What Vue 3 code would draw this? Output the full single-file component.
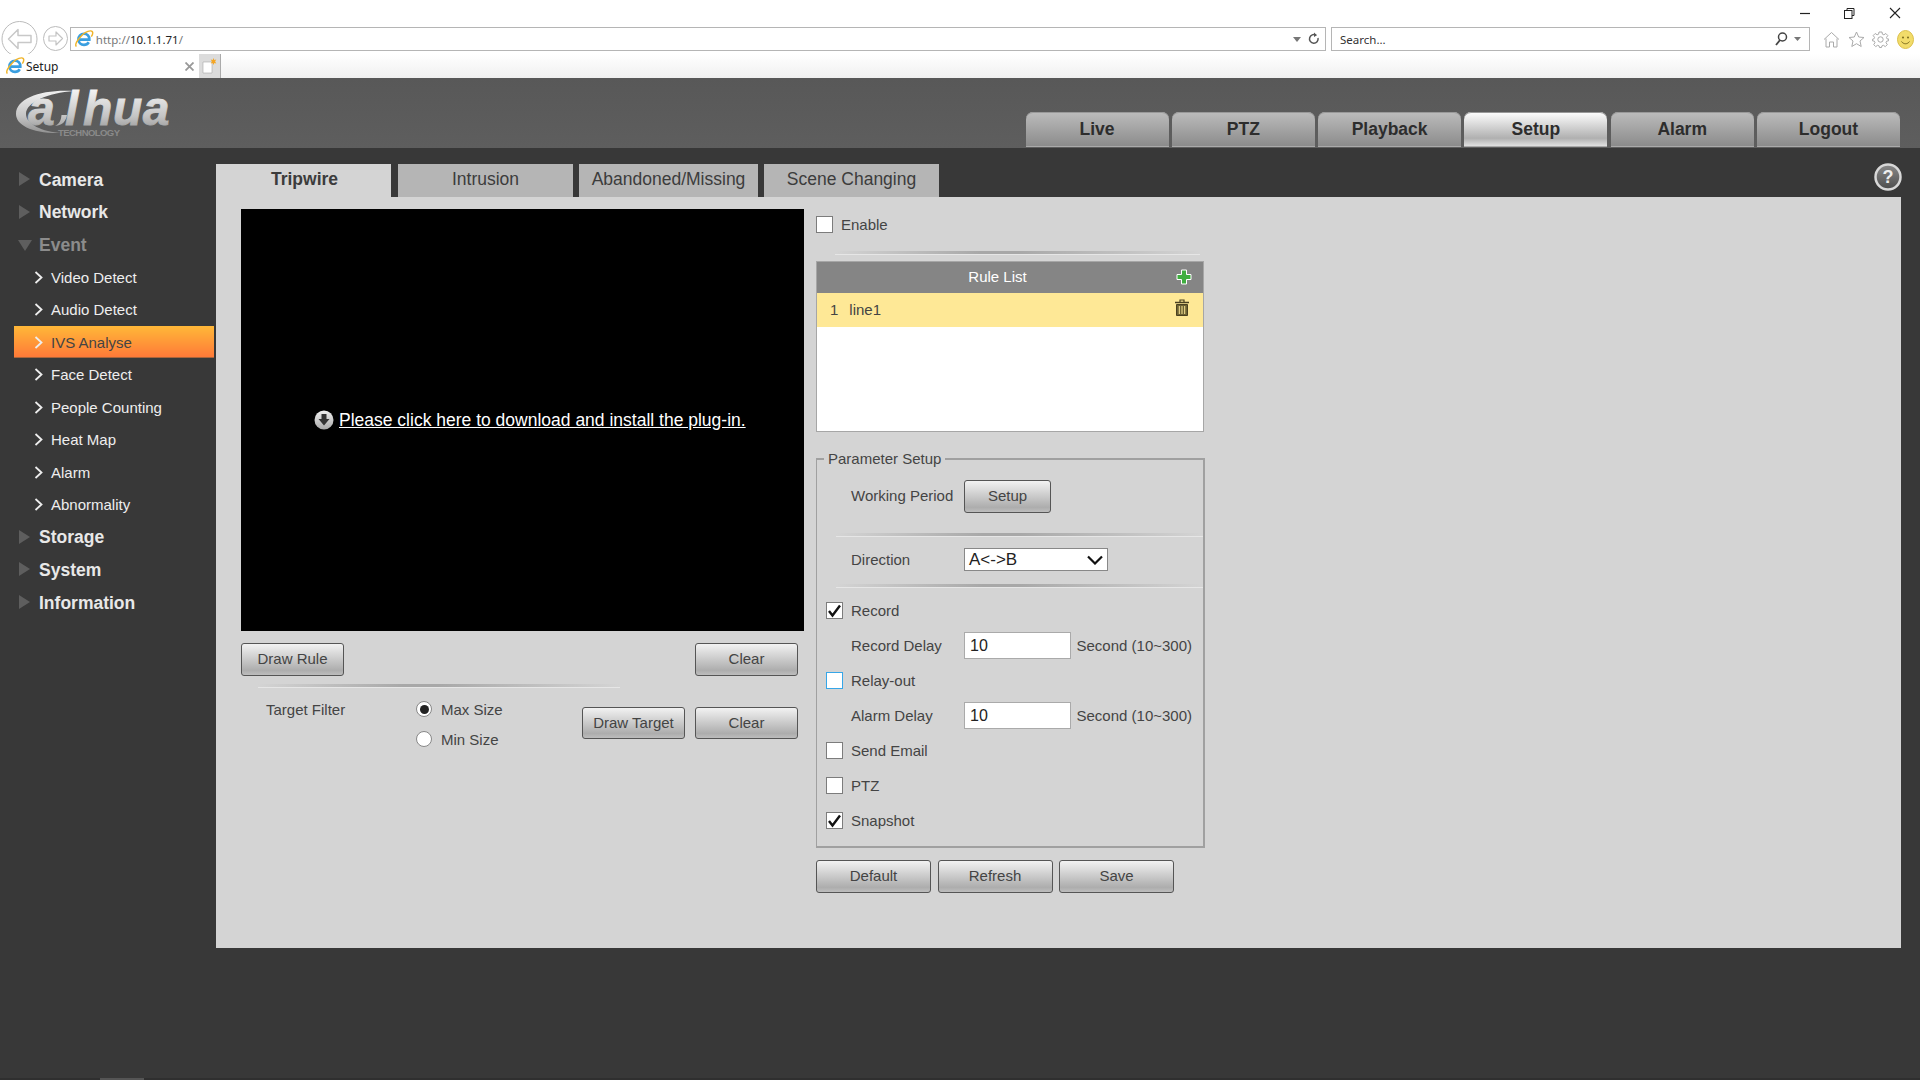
<script setup>
const mainTabs = ['Live', 'PTZ', 'Playback', 'Setup', 'Alarm', 'Logout']
const subTabs = ['Tripwire', 'Intrusion', 'Abandoned/Missing', 'Scene Changing']
const eventItems = ['Video Detect', 'Audio Detect', 'IVS Analyse', 'Face Detect', 'People Counting', 'Heat Map', 'Alarm', 'Abnormality']
</script>

<template>
  <div class="page">
    <div class="chrome">
      <div class="winbar">
        <span class="wbtn"><svg width="10" height="10" viewBox="0 0 10 10"><path d="M0 5.5h10" stroke="#222" stroke-width="1.2"/></svg></span>
        <span class="wbtn"><svg width="11" height="11" viewBox="0 0 11 11" fill="none" stroke="#222"><path d="M3 2.500V.5h7v7H8"/><rect x=".5" y="2.500" width="7.500" height="8"/></svg></span>
        <span class="wbtn"><svg width="12" height="12" viewBox="0 0 12 12"><path d="M1 1l10 10M11 1L1 11" stroke="#222" stroke-width="1.1"/></svg></span>
      </div>
      <div class="navbar">
        <svg class="back" width="37" height="36" viewBox="0 0 37 36" fill="none"><circle cx="18.500" cy="18" r="17.500" stroke="#bbb" fill="#fff"/><path d="M7.500 18L17 8.500v6h13v7H17v6z" stroke="#c8c8c8" stroke-width="1.500" stroke-linejoin="round"/></svg>
        <svg class="fwd" width="25" height="25" viewBox="0 0 25 25" fill="none"><circle cx="12.500" cy="12.500" r="12" stroke="#bbb" fill="#fff"/><path d="M19.500 12.500L13 6v4H6v5h7v4z" stroke="#c4c4c4" stroke-width="1.200" stroke-linejoin="round"/></svg>
        <div class="addr">
          <svg class="ie" width="20" height="20" viewBox="0 0 18 18" fill="none"><path d="M4.500 9.500h9.300C14 6.500 12 4.300 9 4.300S4 6.500 4 9.300s2.200 5 5 5c2 0 3.400-.9 4.300-2.300" stroke="#3a9fe0" stroke-width="2.400"/><path d="M2.200 15.800C-.5 13.500 8.500 1.500 15 1.700c2.800.2 2 3.300.6 5.200" stroke="#f0b429" stroke-width="1.300"/></svg>
          <span class="url"><span class="dim">http://</span>10.1.1.71<span class="dim">/</span></span>
          <span class="grow"></span>
          <svg width="8" height="5" viewBox="0 0 8 5"><path d="M0 0h8L4 5z" fill="#777"/></svg>
          <svg class="refresh" width="12" height="14" viewBox="0 0 12 14" fill="none"><path d="M10 6a4.300 4.300 0 1 1-2-2.800" stroke="#555" stroke-width="1.500"/><path d="M6 .5l3 2.700-3 1.800z" fill="#555"/></svg>
        </div>
        <div class="search">
          <span>Search...</span>
          <span class="grow"></span>
          <svg width="13" height="14" viewBox="0 0 13 14" fill="none"><circle cx="7.500" cy="5" r="4" stroke="#444" stroke-width="1.500"/><path d="M5 8l-4 5" stroke="#444" stroke-width="1.800"/></svg>
          <svg class="caret" width="7" height="4" viewBox="0 0 7 4"><path d="M0 0h7L3.500 4z" fill="#777"/></svg>
        </div>
        <div class="tools">
          <svg width="17" height="17" viewBox="0 0 17 17" fill="none" stroke="#aaa"><path d="M1 8.500L8.500 1.500 16 8.500M3 7.500V16h3.500v-5h4v5H14V7.500"/></svg>
          <svg width="17" height="17" viewBox="0 0 17 17" fill="none" stroke="#aaa"><path d="M8.500 1l2.200 5 5.300.5-4 3.500 1.200 5.500-4.700-2.800L3.800 15.500 5 10 1 6.500 6.300 6z"/></svg>
          <svg width="17" height="17" viewBox="0 0 17 17" fill="none" stroke="#aaa"><circle cx="8.500" cy="8.500" r="2.700"/><path d="M7 1h3l.4 2.200 1.500.6 1.900-1.300 2 2-1.300 1.900.6 1.500 2.200.4v0M7 1l-.4 2.200-1.500.6-1.900-1.300-2 2 1.300 1.900-.6 1.500L.5 8.300v1.500l1.900.4.6 1.500-1.300 1.900 2 2 1.900-1.300 1.500.6L7.500 16.500h2l.4-1.600 1.500-.6 1.900 1.300 2-2-1.300-1.900.6-1.500 1.900-.4V8.300"/></svg>
          <svg width="17" height="19" viewBox="0 0 17 19"><ellipse cx="8.500" cy="9.500" rx="8" ry="9" fill="#f2dc6a" stroke="#dcc04a"/><circle cx="6" cy="7.500" r="1" fill="#7a6a1c"/><circle cx="11" cy="7.500" r="1" fill="#7a6a1c"/><path d="M4.500 11.500c2 3 6 3 8 0" stroke="#7a6a1c" fill="none"/></svg>
        </div>
      </div>
      <div class="tabbar">
        <div class="btab">
          <svg width="20" height="20" viewBox="0 0 18 18" fill="none"><path d="M4.500 9.500h9.300C14 6.500 12 4.300 9 4.300S4 6.500 4 9.300s2.200 5 5 5c2 0 3.400-.9 4.300-2.300" stroke="#3a9fe0" stroke-width="2.400"/><path d="M2.200 15.800C-.5 13.500 8.500 1.500 15 1.700c2.800.2 2 3.300.6 5.200" stroke="#f0b429" stroke-width="1.300"/></svg>
          <span class="btitle">Setup</span>
          <span class="grow"></span>
          <svg width="9" height="9" viewBox="0 0 9 9"><path d="M.5.500l8 8M8.500.500l-8 8" stroke="#999" stroke-width="1.800"/></svg>
        </div>
        <div class="newtab">
          <svg width="15" height="17" viewBox="0 0 15 17"><path d="M1 4h9v11H1z" fill="#fff" stroke="#aaa" stroke-width=".6"/><path d="M11.500 0l.8 2 2-.5-1.200 2 1.200 2-2-.5-.8 2-.8-2-2 .5 1.200-2-1.200-2 2 .5z" fill="#f5a623"/></svg>
        </div>
      </div>
    </div>

    <header class="head">
      <svg class="logo" width="180" height="69" viewBox="0 0 180 69">
        <defs>
          <linearGradient id="lg" gradientUnits="userSpaceOnUse" x1="0" y1="12" x2="0" y2="56"><stop offset="0" stop-color="#f2f2f2"/><stop offset=".6" stop-color="#c4c4c4"/><stop offset="1" stop-color="#8f8f8f"/></linearGradient>
        </defs>
        <path d="M74 13C42 11 16 20 16 36c0 11 16 20 46 19-20-1-36-9-36-19 0-12 22-21 48-23z" fill="url(#lg)"/>
        <path d="M67 37c-1 6-4 10-12 11 4-2 6-5 6.500-11z" fill="url(#lg)"/>
        <g font-family="Liberation Sans" font-weight="700" font-style="italic" font-size="48" fill="url(#lg)" stroke="url(#lg)" stroke-width=".8">
          <text x="28" y="47">a</text>
          <text x="65" y="47">l</text>
          <text x="83" y="47" letter-spacing=".6">hua</text>
        </g>
        <text x="58" y="58" font-family="Liberation Sans" font-weight="700" font-size="9.500" fill="#8a8a8a" textLength="62">TECHNOLOGY</text>
      </svg>
      <nav class="mainnav">
        <div v-for="t in mainTabs" :key="t" class="mtab" :class="{ on: t === 'Setup' }">{{ t }}</div>
      </nav>
    </header>

    <div class="body">
      <aside class="side">
        <div class="m1"><i class="tri"></i>Camera</div>
        <div class="m1"><i class="tri"></i>Network</div>
        <div class="m1 open"><i class="tridown"></i>Event</div>
        <div v-for="e in eventItems" :key="e" class="m2" :class="{ cur: e === 'IVS Analyse' }">
          <svg width="9" height="13" viewBox="0 0 9 13" fill="none"><path d="M1.500 1l6 5.500-6 5.500" stroke="currentColor" stroke-width="1.800"/></svg>
          <span>{{ e }}</span>
        </div>
        <div class="m1"><i class="tri"></i>Storage</div>
        <div class="m1"><i class="tri"></i>System</div>
        <div class="m1"><i class="tri"></i>Information</div>
      </aside>

      <main class="main">
        <div class="subtabs">
          <div v-for="(t, i) in subTabs" :key="t" class="stab" :class="['s' + i, { on: i === 0 }]">{{ t }}</div>
          <svg class="help" width="28" height="28" viewBox="0 0 28 28">
            <defs><linearGradient id="hg" x1="0" y1="0" x2="0" y2="1"><stop offset="0" stop-color="#8a8a8a"/><stop offset="1" stop-color="#4c4c4c"/></linearGradient></defs>
            <circle cx="14" cy="14" r="12.500" fill="url(#hg)" stroke="#d8d8d8" stroke-width="2.500"/><text x="14" y="20" text-anchor="middle" font-family="Liberation Sans" font-weight="700" font-size="18" fill="#eee">?</text>
          </svg>
        </div>
        <section class="panel">
          <div class="left">
            <div class="video">
              <svg width="20" height="20" viewBox="0 0 20 20">
                <defs><linearGradient id="dg" x1="0" y1="0" x2="0" y2="1"><stop offset="0" stop-color="#f0f0f0"/><stop offset="1" stop-color="#a8a8a8"/></linearGradient></defs>
                <circle cx="10" cy="10" r="9.500" fill="url(#dg)"/><path d="M7.500 4h5v5h3L10 15.500 4.500 9h3z" fill="#333"/>
              </svg>
              <a class="plug">Please click here to download and install the plug-in.</a>
            </div>
            <div class="row between r1">
              <button class="btn w103">Draw Rule</button>
              <button class="btn w103">Clear</button>
            </div>
            <div class="sep leftsep"></div>
            <div class="filter">
              <span class="flabel">Target Filter</span>
              <div class="radios">
                <label class="radio"><i class="rd on"></i>Max Size</label>
                <label class="radio"><i class="rd"></i>Min Size</label>
              </div>
              <div class="fbtns">
                <button class="btn w103">Draw Target</button>
                <button class="btn w103">Clear</button>
              </div>
            </div>
          </div>

          <div class="right">
            <div class="enable"><i class="cb"></i><span>Enable</span></div>
            <div class="sep rsep"></div>
            <div class="rules">
              <div class="rhead">Rule List
                <svg class="plus" width="16" height="16" viewBox="0 0 16 16"><path d="M5.500 1h5v4.500H15v5h-4.500V15h-5v-4.500H1v-5h4.500z" fill="#3fae3f" stroke="#fff" stroke-width="1"/></svg>
              </div>
              <div class="rrow">
                <span class="rn">1</span><span class="rname">line1</span>
                <svg class="trash" width="14" height="17" viewBox="0 0 14 17" fill="none" stroke="#4a4020"><path d="M0 3.500h14" stroke-width="1.500"/><path d="M5 3V1h4v2" stroke-width="1.200"/><path d="M1.500 5.500h11v11h-11z" fill="#6d6233" stroke-width="1"/><path d="M4.300 7v8M7 7v8M9.700 7v8" stroke="#fee896" stroke-width="1"/></svg>
              </div>
            </div>

            <fieldset class="params">
              <legend>Parameter Setup</legend>
              <div class="p p1"><span class="lab">Working Period</span><button class="btn setup">Setup</button></div>
              <div class="sep psep a"></div>
              <div class="p p2"><span class="lab">Direction</span>
                <div class="select"><span>A&lt;-&gt;B</span><svg width="16" height="10" viewBox="0 0 16 10" fill="none"><path d="M1 1.500l7 7 7-7" stroke="#111" stroke-width="2.200"/></svg></div>
              </div>
              <div class="sep psep b"></div>
              <div class="p c"><i class="cb ck"><svg width="15" height="14" viewBox="0 0 15 14" fill="none"><path d="M2 7l3.500 4.500L13 1.500" stroke="#111" stroke-width="2.400"/></svg></i><span>Record</span></div>
              <div class="p"><span class="lab">Record Delay</span><div class="input">10</div><span class="unit">Second (10~300)</span></div>
              <div class="p c"><i class="cb focus"></i><span>Relay-out</span></div>
              <div class="p"><span class="lab">Alarm Delay</span><div class="input">10</div><span class="unit">Second (10~300)</span></div>
              <div class="p c"><i class="cb"></i><span>Send Email</span></div>
              <div class="p c"><i class="cb"></i><span>PTZ</span></div>
              <div class="p c"><i class="cb ck"><svg width="15" height="14" viewBox="0 0 15 14" fill="none"><path d="M2 7l3.500 4.500L13 1.500" stroke="#111" stroke-width="2.400"/></svg></i><span>Snapshot</span></div>
            </fieldset>

            <div class="actions">
              <button class="btn act">Default</button>
              <button class="btn act">Refresh</button>
              <button class="btn act">Save</button>
            </div>
          </div>
        </section>
      </main>
    </div>
    <div class="foot"><span class="thumb"></span></div>
  </div>
</template>

<style>
html, body { margin: 0; background: #383838; overflow: hidden; }
</style>

<style scoped>
* { box-sizing: border-box; }
.page { width: 1920px; height: 1080px; display: flex; flex-direction: column; background: #383838; font-family: "Liberation Sans", Arial, sans-serif; font-size: 15px; color: #444; }
.grow { flex: 1; }

.chrome { height: 78px; background: #fff; display: flex; flex-direction: column; font-family: "Noto Sans", "Open Sans", sans-serif; font-size: 11.5px; color: #333; }
.winbar { height: 26px; display: flex; justify-content: flex-end; align-items: center; padding: 0 19px 0 0; gap: 34px; }
.wbtn { display: flex; }
.navbar { height: 28px; display: flex; align-items: flex-start; }
.back { margin: -5px 0 0 1px; flex: none; }
.fwd { margin: 0 0 0 5px; flex: none; }
.addr { margin: 1px 0 0 2px; width: 1256px; height: 24px; border: 1px solid #b5b5b5; display: flex; align-items: center; padding: 0 5px 0 3px; gap: 4px; }
.ie { margin-right: -2.200px; }
.url { color: #222; }
.dim { color: #777; }
.refresh { margin-left: 3px; }
.search { margin: 1px 0 0 5px; width: 479px; height: 24px; border: 1px solid #b5b5b5; display: flex; align-items: center; padding: 0 8px 0 8px; gap: 5px; }
.caret { margin-left: 1px; }
.tools { display: flex; gap: 7.500px; margin: 1px 0 0 13px; align-items: center; height: 24px; }
.tabbar { height: 24px; display: flex; background: linear-gradient(#fff, #f0f0f0); }
.btab { width: 199px; background: #fff; display: flex; align-items: center; padding: 0 5px 0 5px; gap: 1px; }
.btitle { color: #222; font-size: 12px; }
.newtab { width: 22px; background: #dcdcdc; border-right: 1px solid #aaa; display: flex; align-items: center; justify-content: center; }

.head { height: 70px; flex: none; background: linear-gradient(#585858, #5e5e5e); display: flex; justify-content: space-between; align-items: flex-end; padding: 0 20px 1px 0; }
.logo { flex: none; align-self: flex-start; }
.mainnav { display: flex; gap: 3.300px; }
.mtab { width: 143px; height: 35px; border-radius: 7px 7px 0 0; background: linear-gradient(#bcbcbc, #8a8a8a); box-shadow: inset 0 -1px 0 #aaa, inset 0 1px 0 #999; color: #2d2d2d; font-weight: 700; font-size: 17.500px; display: flex; align-items: center; justify-content: center; }
.mtab.on { background: linear-gradient(#fff, #b0b0b0 75%, #e8e8e8); }

.body { flex: 1; display: flex; min-height: 0; }
.side { width: 216px; flex: none; padding: 15px 2px 0 14px; }
.m1 { height: 32.600px; display: flex; align-items: center; font-size: 17.500px; font-weight: 700; color: #e8e8e8; padding: 1.500px 0 0 25px; position: relative; }
.m1.open { color: #8c8c8c; }
.tri { position: absolute; left: 5px; top: 9px; border-left: 11px solid #5e5e5e; border-top: 7.500px solid transparent; border-bottom: 7.500px solid transparent; }
.tridown { position: absolute; left: 4px; top: 12px; border-top: 11px solid #5e5e5e; border-left: 7.500px solid transparent; border-right: 7.500px solid transparent; }
.m2 { height: 32.500px; display: flex; align-items: center; gap: 8px; padding-left: 20px; color: #eee; font-size: 15px; }
.m2.cur { background: linear-gradient(#ffb838, #ff7838); box-shadow: inset 0 -1px 0 #a9643a; }
.m2.cur span { color: #444; }

.main { width: 1685px; flex: none; display: flex; flex-direction: column; height: 800px; }
.subtabs { display: flex; height: 49px; padding-top: 16px; position: relative; }
.stab { height: 33px; padding-bottom: 2px; background: #b5b5b5; color: #3c3c3c; font-size: 17.500px; display: flex; align-items: center; justify-content: center; }
.s0 { width: 175px; padding-left: 2px; background: #d4d4d4; font-weight: 700; }
.s1 { width: 175px; margin-left: 7px; }
.s2 { width: 179px; margin-left: 6px; }
.s3 { width: 175px; margin-left: 6px; }
.help { position: absolute; right: -1px; top: 15px; }
.panel { height: 751px; background: #d4d4d4; display: flex; padding: 12px 0 0 25px; }

.left { width: 563px; }
.video { height: 422px; background: #000; display: flex; align-items: center; padding-left: 73px; gap: 5px; }
.plug { color: #fff; text-decoration: underline; font-size: 17.500px; }
.row { display: flex; }
.between { justify-content: space-between; padding-right: 6px; }
.r1 { margin-top: 12px; }
.btn { height: 33px; border: 1px solid #555; border-radius: 3px; background: linear-gradient(#f2f2f2, #adadad 85%, #bdbdbd); color: #444; font-family: inherit; font-size: 15px; padding: 0 0 2px; }
.w103 { width: 103px; }
.sep { height: 3px; background: linear-gradient(90deg, transparent, #a8a8a8 40%, #a8a8a8 50%, transparent); box-shadow: 0 1px 0 #e6e6e6; }
.leftsep { margin: 8px 0 0 17px; width: 362px; }
.filter { display: flex; margin-top: 9px; }
.flabel { width: 176px; padding: 5px 0 0 25px; }
.radios { width: 165px; display: flex; flex-direction: column; gap: 12px; padding-top: 4px; }
.radio { display: flex; align-items: center; height: 18px; }
.rd { width: 16px; height: 16px; margin: 0 9px 0 -1px; border-radius: 50%; background: #fff; border: 1px solid #888; position: relative; }
.rd.on::after { content: ""; position: absolute; left: 2.500px; top: 2.500px; width: 9px; height: 9px; border-radius: 50%; background: #222; }
.fbtns { display: flex; gap: 10px; margin-top: 11px; height: 31px; }
.fbtns .btn { height: 32px; }

.right { margin-left: 12px; width: 388px; }
.enable { display: flex; align-items: center; height: 30px; gap: 8px; }
.cb { width: 17px; height: 17px; flex: none; background: #fff; border: 1px solid #7c7c7c; display: flex; align-items: center; justify-content: center; }
.cb.focus { border-color: #36a6e8; }
.rsep { margin: 11.500px 0 0 19px; width: 365px; }
.rules { margin-top: 7.500px; height: 171px; border: 1px solid #a6a6a6; background: #fff; }
.rhead { height: 31px; background: #858585; color: #fff; display: flex; align-items: center; justify-content: center; position: relative; padding: 0 25px 2px 0; }
.plus { position: absolute; right: 11px; top: 7px; }
.rrow { height: 34px; background: #fee896; display: flex; align-items: center; position: relative; padding: 0 0 2px 13px; color: #444; }
.rname { margin-left: 11px; }
.trash { position: absolute; right: 14px; top: 6px; }
.params { margin: 18px 0 0; padding: 0 0 0 9px; width: 386.500px; height: 398px; border: 1px solid #a0a0a0; border-width: 2px 2px 2px 1px; }
legend { padding: 0 4px; margin-left: -2px; font-size: 15px; line-height: 17px; }
.p { height: 35px; display: flex; align-items: center; }
.p.c { gap: 8px; }
.p.c .cb { flex: none; }
.lab { width: 115px; padding-left: 25px; flex: none; white-space: nowrap; }
.p1 { height: 33px; margin-top: 13px; }
.p1 .lab { padding-bottom: 2px; }
.setup { width: 87px; height: 33px; }
.p2 { height: 23px; }
.p .lab { width: 138px; }
.psep { margin-left: 10px; width: 367px; }
.psep.a { margin-top: 20px; margin-bottom: 12px; }
.psep.b { margin-top: 13px; margin-bottom: 6px; }
.select { width: 144px; height: 23px; background: #fff; border: 1px solid #888; font-size: 17px; color: #222; display: flex; align-items: center; justify-content: space-between; padding: 0 4px; }
.input { width: 107px; height: 27px; background: #fff; border: 1px solid #aaa; font-size: 16px; color: #222; padding-left: 5px; display: flex; align-items: center; }
.unit { margin-left: 5.500px; }
.actions { display: flex; gap: 6.500px; margin-top: 12px; }
.act { width: 115px; }

.foot { height: 2px; flex: none; background: #2f2f2f; padding-left: 100px; }
.thumb { display: block; width: 44px; height: 2px; background: #555; }
</style>
